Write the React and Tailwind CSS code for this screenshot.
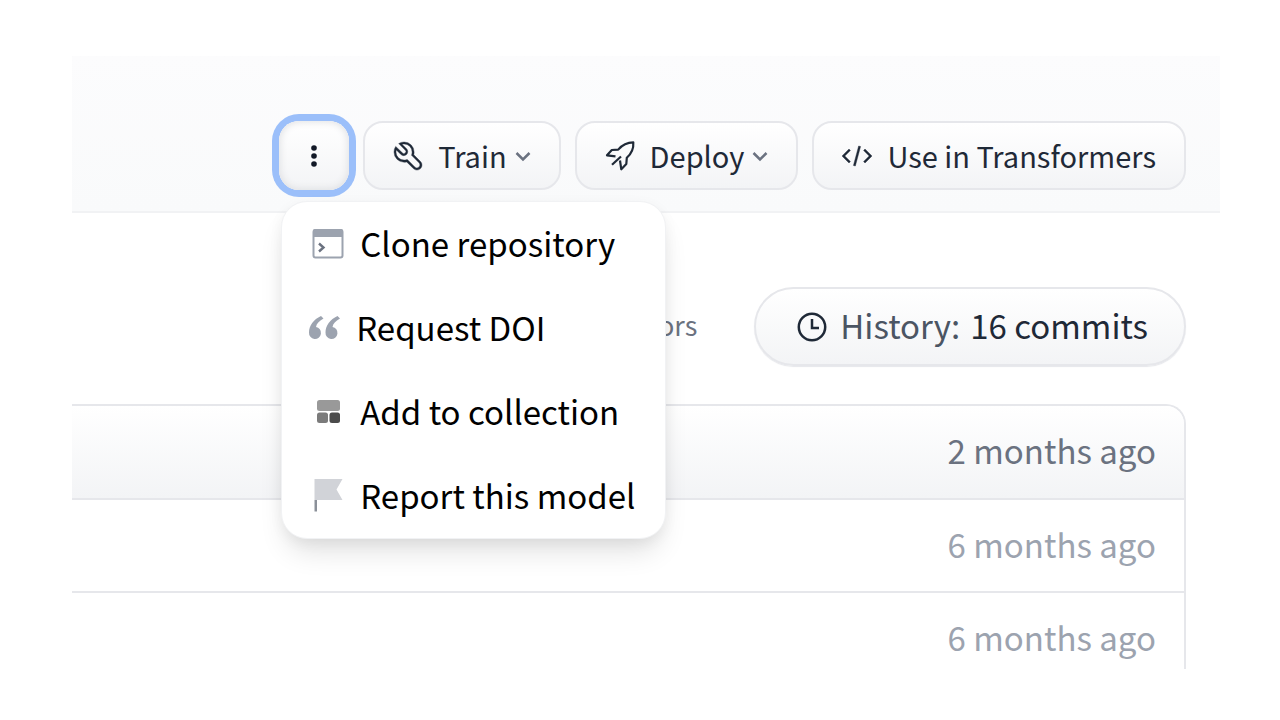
function WrenchIcon() {
  return (
    <svg className="shrink-0" width="32" height="32" viewBox="0 0 32 32" fill="currentColor" aria-hidden="true">
      <path stroke="currentColor" strokeWidth="0.4" d="M12.1 2a9.8 9.8 0 0 0-5.4 1.6l6.4 6.4a2.1 2.1 0 0 1 .2 3a2.1 2.1 0 0 1-3-.2L3.7 6.4A9.84 9.84 0 0 0 2 12.1a10.14 10.14 0 0 0 10.1 10.1a10.9 10.9 0 0 0 2.6-.3l6.7 6.7a5 5 0 0 0 7.1-7.1l-6.7-6.7a10.9 10.9 0 0 0 .3-2.6A10 10 0 0 0 12.1 2zm8 10.1a7.61 7.61 0 0 1-.3 2.1l-.3 1.1l.8.8l6.7 6.7a2.88 2.88 0 0 1 .9 2.1A2.72 2.72 0 0 1 27 27a2.9 2.9 0 0 1-4.2 0l-6.7-6.7l-.8-.8l-1.1.3a7.61 7.61 0 0 1-2.1.3a8.27 8.27 0 0 1-5.7-2.3A7.63 7.63 0 0 1 4 12.1a8.33 8.33 0 0 1 .3-2.2l4.4 4.4a4.14 4.14 0 0 0 5.9.2a4.14 4.14 0 0 0-.2-5.9L10 4.2a6.45 6.45 0 0 1 2-.3a8.27 8.27 0 0 1 5.7 2.3a8.49 8.49 0 0 1 2.4 5.9z" />
    </svg>
  );
}

function RocketIcon() {
  return (
    <svg className="shrink-0" width="32" height="32" viewBox="0 0 32 32" fill="none" stroke="currentColor" strokeWidth="2.2" strokeLinejoin="round" aria-hidden="true">
      <path d="M11.5 16.3L3 15.3L7.8 10L14.2 9.600C18.500 4.500 23 2.300 29.300 2.300C29.800 8.500 28 13 22.800 17.800L22.300 24L17.300 29.300L16 20.500" />
      <path d="M17 16.500L8 24.800" />
    </svg>
  );
}

function CodeIcon() {
  return (
    <svg className="shrink-0" width="32" height="32" viewBox="0 0 32 32" fill="currentColor" aria-hidden="true">
      <path stroke="currentColor" strokeWidth="0.4" d="m31 16l-7 7l-1.41-1.41L28.17 16l-5.58-5.59L24 9l7 7zM1 16l7-7l1.41 1.41L3.83 16l5.58 5.59L8 23l-7-7zm11.42 9.484L17.64 6l1.932.517L14.352 26z" />
    </svg>
  );
}

function ChevronIcon() {
  return (
    <svg className="ml-2 shrink-0 text-[#6b7280]" width="16" height="16" viewBox="0 0 16 16" fill="none" stroke="currentColor" strokeWidth="2.5" aria-hidden="true">
      <path d="M1.500 5L8 11.500L14.500 5" />
    </svg>
  );
}

function ClockIcon() {
  return (
    <svg className="shrink-0" width="32" height="32" viewBox="0 -1 32 32" fill="none" stroke="currentColor" strokeWidth="2.5" aria-hidden="true">
      <circle cx="16" cy="16" r="13.2" />
      <path d="M16 8V17H23" />
    </svg>
  );
}

function DotsIcon() {
  return (
    <svg className="shrink-0" width="32" height="32" viewBox="0 0 32 32" fill="currentColor" aria-hidden="true">
      <circle cx="16" cy="8" r="2.8" />
      <circle cx="16" cy="16" r="2.8" />
      <circle cx="16" cy="24" r="2.8" />
    </svg>
  );
}

function TerminalIcon() {
  return (
    <svg className="shrink-0" width="32" height="32" viewBox="0 -1 32 32" fill="none" aria-hidden="true">
      <rect x="1.5" y="2" width="29" height="27.5" rx="2" stroke="#9ca3af" strokeWidth="2" />
      <path d="M1 9V3a2 2 0 0 1 2-2h26a2 2 0 0 1 2 2v6z" fill="#9ca3af" />
      <path d="M7 15.500l4.500 4-4.500 4" stroke="#6b7280" strokeWidth="2.4" />
    </svg>
  );
}

function QuoteIcon() {
  return (
    <svg className="shrink-0" width="32" height="32" viewBox="0 0 32 32" fill="#9ca3af" aria-hidden="true">
      <path d="M13 5C5.500 8.500 1 14.500 1 21.500A6 6 0 1 0 8 16C8.500 12.500 11 10 15.500 7.500Z" />
      <path d="M29.500 5C22 8.500 17.500 14.500 17.500 21.500A6 6 0 1 0 24.500 16C25 12.500 27.500 10 32 7.500Z" />
    </svg>
  );
}

function CollectionIcon() {
  return (
    <svg className="shrink-0" width="32" height="32" viewBox="0 -1 32 32" aria-hidden="true">
      <rect x="5" y="4" width="23" height="11" rx="2.5" fill="#999" />
      <rect x="5" y="16.5" width="11" height="10.5" rx="2.5" fill="#7b7b7b" />
      <rect x="17.5" y="16.5" width="10.5" height="10.5" rx="2.5" fill="#4b4b4b" />
    </svg>
  );
}

function FlagIcon() {
  return (
    <svg className="shrink-0" width="32" height="34" viewBox="0 0 32 34" aria-hidden="true">
      <path d="M2.500 1h28l-6 10.500 6 10.500H2.500z" fill="#d1d3d8" />
      <path d="M2.500 22h2.500v11.500H2.500z" fill="#8b9099" />
    </svg>
  );
}

function ToolbarButton({ icon, label, menu }) {
  return (
    <button
      type="button"
      className="flex items-center rounded-[20px] border-2 border-[#e6e7eb] bg-linear-to-b from-white to-[#f3f4f6] py-3 pr-7 pl-[27px] text-[29px] leading-[41px] whitespace-nowrap text-[#1f2937]"
    >
      {icon}
      <span className="ml-[14px]">{label}</span>
      {menu && <ChevronIcon />}
    </button>
  );
}

const menuItems = [
  { label: "Clone repository", icon: <TerminalIcon />, padding: "pl-[30px]" },
  { label: "Request DOI", icon: <QuoteIcon />, padding: "pl-[26px]" },
  { label: "Add to collection", icon: <CollectionIcon />, padding: "pl-[30px]" },
  { label: "Report this model", icon: <FlagIcon />, padding: "pl-[30px]" },
];

const rows = [
  { time: "2 months ago", style: "bg-linear-to-b from-white to-[#f3f4f6] text-[#6b7280] border-b-2 pb-[26px]" },
  { time: "6 months ago", style: "text-[#9ca3af] border-b-2 pb-[25px]" },
  { time: "6 months ago", style: "text-[#9ca3af] pb-[10px]" },
];

export default function App() {
  return (
    <main className="bg-white py-14 pr-[60px] pl-[72px] font-['Noto_Sans_CJK_SC','Source_Sans_Pro',sans-serif]">
      <header className="flex justify-end gap-[14px] border-b-2 border-[#f1f2f4] bg-linear-to-b from-[#fcfcfd] to-[#f9fafb] pt-[65px] pr-[34px] pb-[21px]">
        <div className="relative flex">
          <button
            type="button"
            aria-label="More options"
            aria-expanded="true"
            className="flex w-[70px] items-center justify-center rounded-[20px] bg-linear-to-b from-white to-[#f3f4f6] text-[#111827] shadow-[inset_0_0_8px_#d9dadd] ring-[7px] ring-[#9bbffa]"
          >
            <DotsIcon />
          </button>
          <ul className="absolute top-20 left-[2px] z-10 w-[385px] rounded-[26px] border border-[#f1f2f4] bg-white shadow-[0_18px_28px_-6px_rgba(0,0,0,0.12),0_4px_14px_rgba(0,0,0,0.05)]">
            {menuItems.map((item) => (
              <li key={item.label}>
                <button
                  type="button"
                  className={"flex w-full items-center gap-4 pt-[19px] pb-[21px] text-left text-[33px] leading-[44px] whitespace-nowrap text-black " + item.padding}
                >
                  {item.icon}
                  {item.label}
                </button>
              </li>
            ))}
          </ul>
        </div>
        <ToolbarButton icon={<WrenchIcon />} label="Train" menu />
        <ToolbarButton icon={<RocketIcon />} label="Deploy" menu />
        <ToolbarButton icon={<CodeIcon />} label="Use in Transformers" />
      </header>

      <section className="pt-[74px] pr-[34px]">
        <div className="flex items-center justify-end gap-[57px]">
          <span className="pb-1 text-[27px] leading-[40px] text-[#6b7280]">contributors</span>
          <a
            href="#history"
            className="flex items-center rounded-full border-2 border-[#e6e7eb] bg-linear-to-b from-white to-[#f3f4f6] pt-[15px] pr-9 pb-[17px] pl-10 text-[33px] leading-[43px] whitespace-nowrap text-[#1f2937] shadow-[0_1px_1px_#e6e7eb]"
          >
            <ClockIcon />
            <span className="ml-3 text-[#4b5563]">History:</span>
            <span className="ml-[10px]">16 commits</span>
          </a>
        </div>

        <div className="mt-[38px] overflow-hidden rounded-tr-[20px] border-t-2 border-r-2 border-[#e6e7eb]">
          <table className="w-full border-separate border-spacing-0" aria-label="Files">
            <tbody>
              {rows.map((row, i) => (
                <tr key={i}>
                  <td className={"border-[#e6e7eb] pt-[22px] pr-7 text-right text-[33px] leading-[44px] " + row.style}>{row.time}</td>
                </tr>
              ))}
            </tbody>
          </table>
        </div>
      </section>
    </main>
  );
}
